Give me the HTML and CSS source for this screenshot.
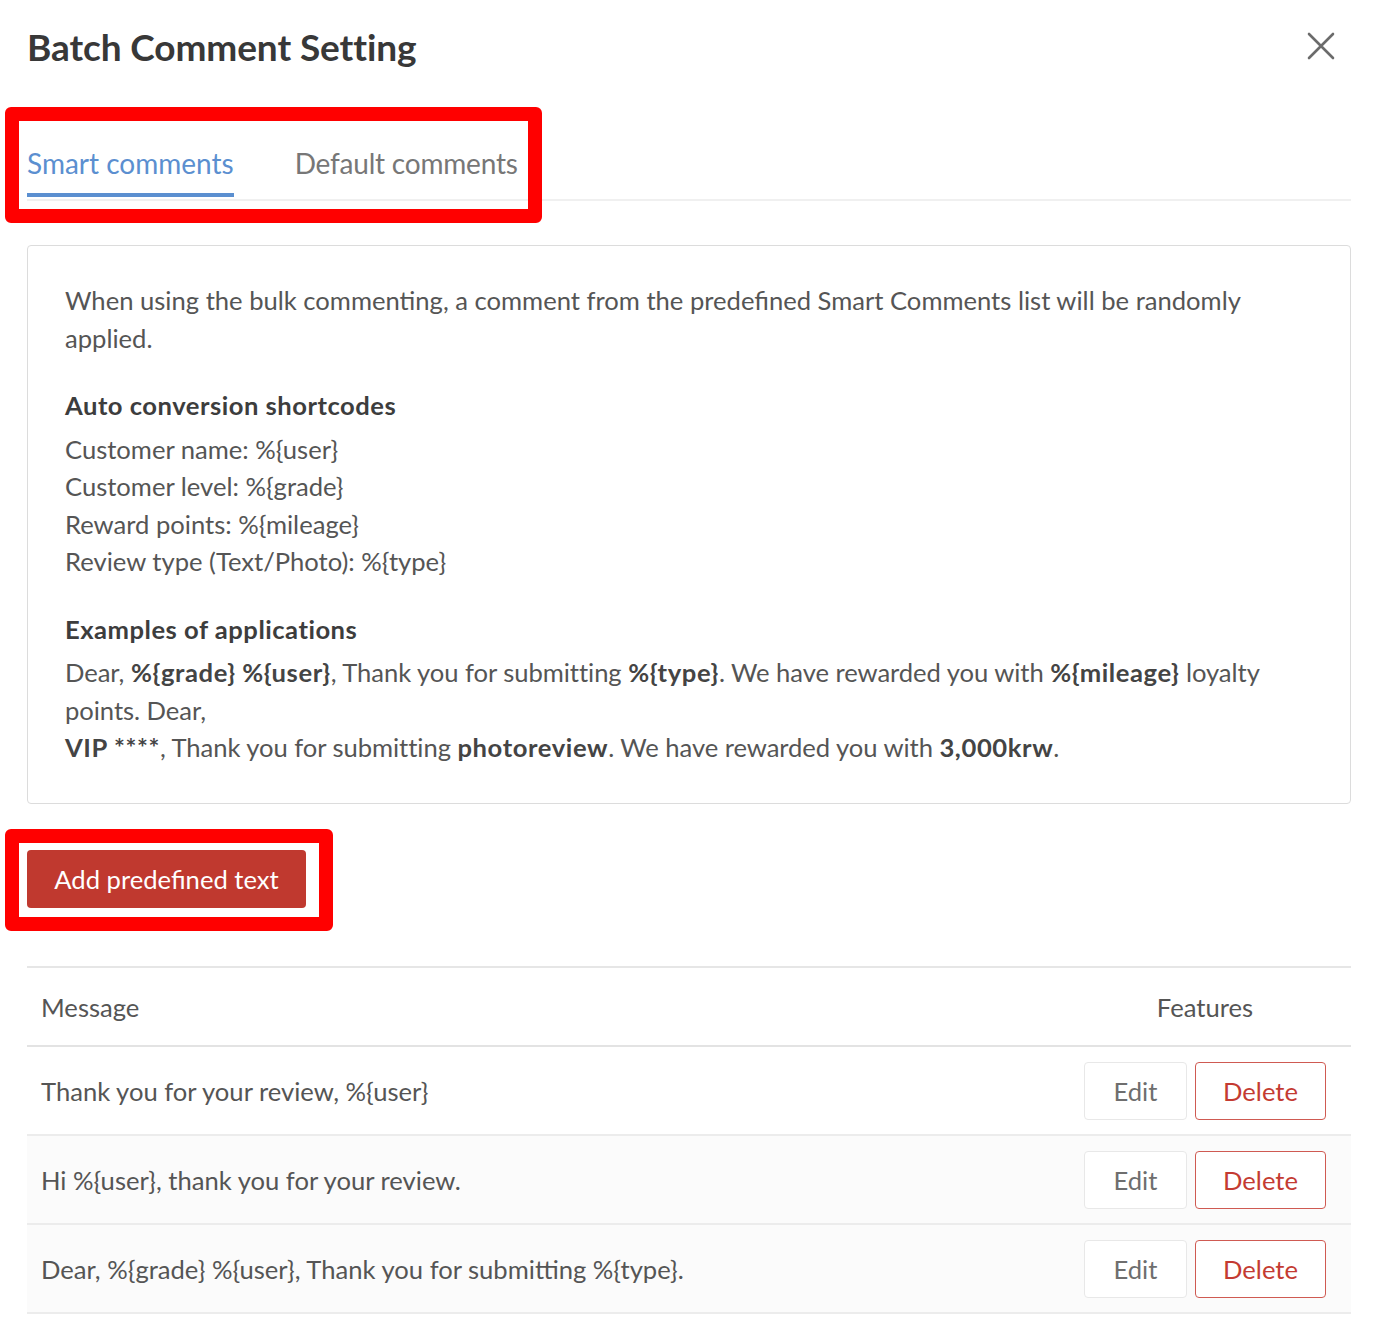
FILE: index.html
```html
<!DOCTYPE html>
<html lang="en">
<head>
<meta charset="utf-8">
<title>Batch Comment Setting</title>
<link rel="stylesheet" href="styles.css">
</head>
<body>
<div class="page">
  <div class="modal">
    <header class="modal-header">
      <h1 class="modal-title">Batch Comment Setting</h1>
      <button class="close-btn" aria-label="Close">
        <svg width="28" height="28" viewBox="0 0 28 28"><path d="M2 2 L26 26 M26 2 L2 26" stroke="#6b6b6b" stroke-width="2.6" stroke-linecap="round" fill="none"/></svg>
      </button>
    </header>

    <nav class="tabs">
      <a class="tab tab-active">Smart comments</a>
      <a class="tab">Default comments</a>
    </nav>

    <section class="info-box">
      <p class="info-intro">When using the bulk commenting, a comment from the predefined Smart Comments list will be randomly applied.</p>
      <h3 class="info-heading">Auto conversion shortcodes</h3>
      <ul class="info-list">
        <li>Customer name: %{user}</li>
        <li>Customer level: %{grade}</li>
        <li>Reward points: %{mileage}</li>
        <li>Review type (Text/Photo): %{type}</li>
      </ul>
      <h3 class="info-heading">Examples of applications</h3>
      <p class="info-example">Dear, <b>%{grade}</b> <b>%{user}</b>, Thank you for submitting <b>%{type}</b>. We have rewarded you with <b>%{mileage}</b> loyalty points. Dear,<br><b>VIP ****</b>, Thank you for submitting <b>photoreview</b>. We have rewarded you with <b>3,000krw</b>.</p>
    </section>

    <div class="actions">
      <button class="btn-primary">Add predefined text</button>
    </div>

    <div class="table">
      <div class="row row-head">
        <div class="cell-msg">Message</div>
        <div class="cell-feat">Features</div>
      </div>
      <div class="row">
        <div class="cell-msg">Thank you for your review, %{user}</div>
        <div class="cell-feat"><button class="btn-edit">Edit</button><button class="btn-delete">Delete</button></div>
      </div>
      <div class="row row-alt">
        <div class="cell-msg">Hi %{user}, thank you for your review.</div>
        <div class="cell-feat"><button class="btn-edit">Edit</button><button class="btn-delete">Delete</button></div>
      </div>
      <div class="row row-alt">
        <div class="cell-msg">Dear, %{grade} %{user}, Thank you for submitting %{type}.</div>
        <div class="cell-feat"><button class="btn-edit">Edit</button><button class="btn-delete">Delete</button></div>
      </div>
    </div>
  </div>

  <div class="annot annot-tabs"></div>
  <div class="annot annot-btn"></div>
</div>
</body>
</html>
```

FILE: styles.css
```css
* { box-sizing: border-box; }

html, body {
  margin: 0;
  padding: 0;
  background: #ffffff;
}

body {
  font-family: "Lato", "Open Sans", "Liberation Sans", sans-serif;
  font-size: 25.6px;
  color: #555555;
}

.page {
  position: relative;
  width: 1378px;
  min-height: 1330px;
}

.modal {
  padding: 0 27px 0 27px;
}

.modal-header {
  display: flex;
  justify-content: space-between;
  align-items: center;
  height: 92px;
}

.modal-title {
  margin: 0;
  font-size: 37px;
  font-weight: 700;
  color: #383838;
  letter-spacing: -0.1px;
}

.close-btn {
  border: none;
  background: none;
  padding: 0;
  margin-right: 16px;
  width: 28px;
  height: 28px;
  display: flex;
  align-items: center;
  justify-content: center;
}

.tabs {
  display: flex;
  gap: 61px;
  height: 109px;
  align-items: flex-end;
  border-bottom: 2px solid #f0f0f0;
}

.tab {
  display: block;
  font-size: 28px;
  color: #777777;
  padding-bottom: 13px;
  border-bottom: 4px solid transparent;
  margin-bottom: 2px;
  letter-spacing: -0.2px;
}

.tab-active {
  color: #5b8fd0;
  border-bottom-color: #5b8fd0;
  letter-spacing: 0;
}

.info-box {
  margin-top: 44px;
  border: 1px solid #dcdcdc;
  border-radius: 4px;
  padding: 36px 36px 36px 37px;
  line-height: 37.5px;
  height: 559px;
}

.info-box p { margin: 0; }

.info-intro {
  margin-bottom: 30px !important;
}

.info-heading {
  margin: 0 0 6px 0;
  font-size: 25.6px;
  font-weight: 700;
  color: #3d3d3d;
  letter-spacing: 0.5px;
}

.info-list {
  list-style: none;
  margin: 0 0 30px 0;
  padding: 0;
}

.info-example {
  letter-spacing: -0.05px;
}

.info-example b {
  color: #444444;
  letter-spacing: 0.6px;
}

.actions {
  margin-top: 46px;
}

.btn-primary {
  font-family: inherit;
  font-size: 25.6px;
  color: #ffffff;
  background: #c0392f;
  border: none;
  border-radius: 4px;
  width: 279px;
  height: 58px;
  padding: 0;
}

.table {
  margin-top: 58px;
  border-top: 2px solid #e6e6e6;
}

.row {
  display: flex;
  align-items: center;
  height: 89px;
  border-bottom: 2px solid #ececec;
}

.row-head {
  height: 79px;
  border-bottom: 2px solid #e3e3e3;
}

.row-alt {
  background: #fbfbfb;
}

.cell-msg {
  flex: 1;
  padding-left: 14px;
}

.cell-feat {
  width: 292px;
  display: flex;
  justify-content: center;
  gap: 8px;
}

.btn-edit, .btn-delete {
  font-family: inherit;
  font-size: 25.6px;
  height: 58px;
  border-radius: 4px;
  background: #ffffff;
  padding: 0;
}

.btn-edit {
  width: 103px;
  color: #6e6e6e;
  border: 1px solid #e8e8e8;
}

.btn-delete {
  width: 131px;
  color: #c43b32;
  border: 1.5px solid #cf5a52;
}

.annot {
  position: absolute;
  border: 14px solid #ff0000;
  border-radius: 6px;
  pointer-events: none;
}

.annot-tabs {
  left: 5px;
  top: 107px;
  width: 537px;
  height: 116px;
}

.annot-btn {
  left: 5px;
  top: 829px;
  width: 328px;
  height: 102px;
}
```
